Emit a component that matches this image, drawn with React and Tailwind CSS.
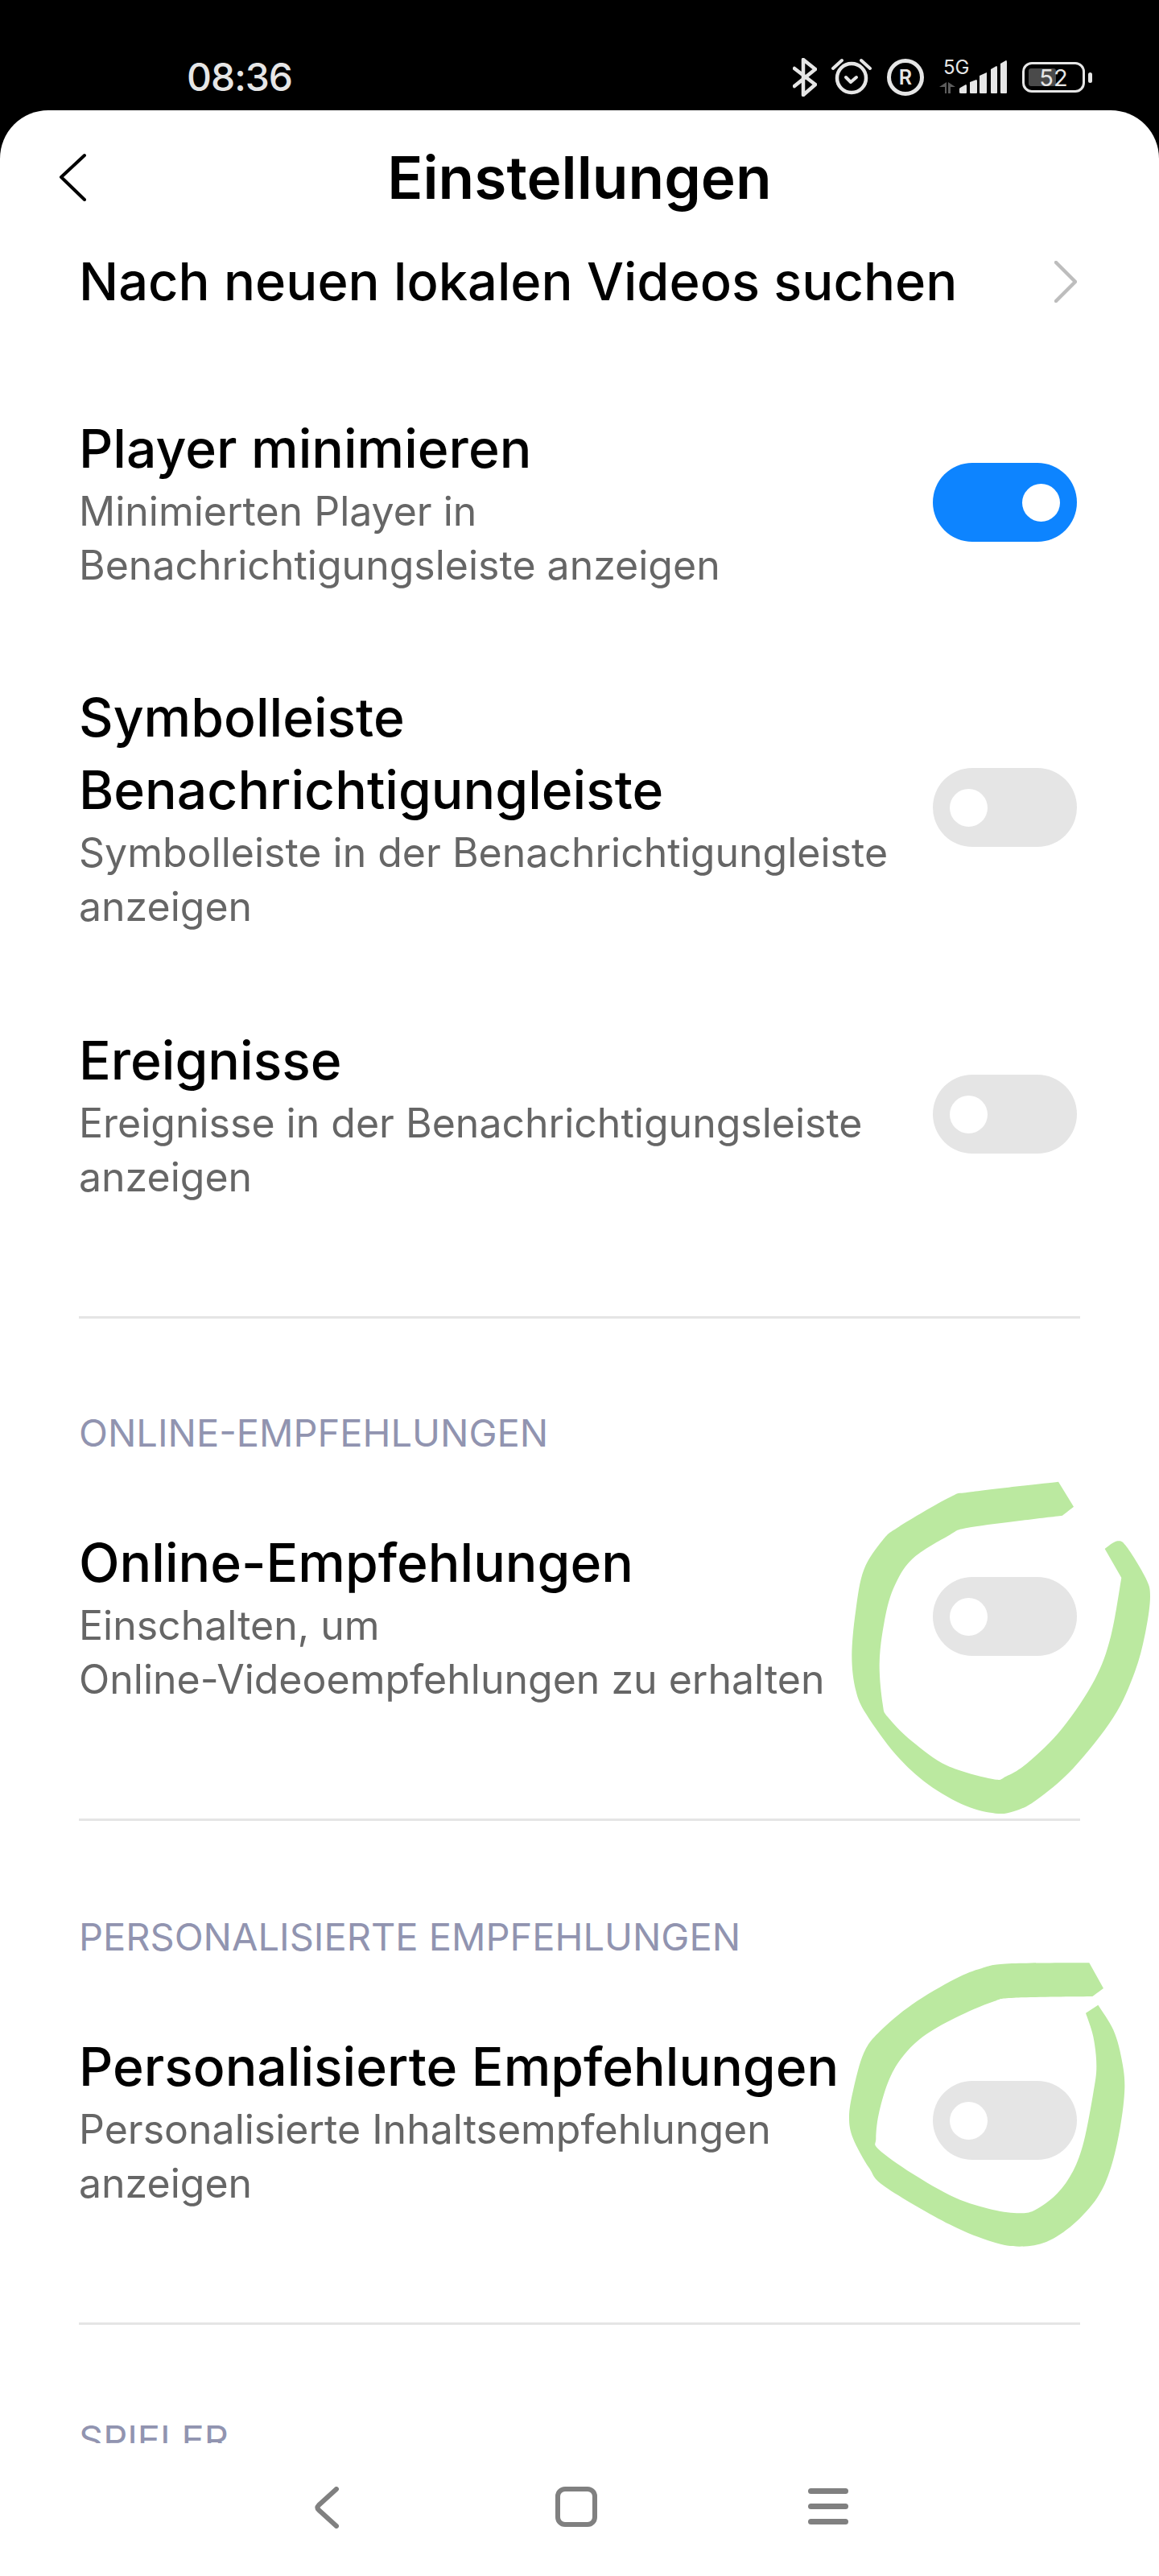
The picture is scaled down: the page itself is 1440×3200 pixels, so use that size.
const font = 'font-["Inter","Noto_Sans",sans-serif]'

const catmull = (pts) => {
  let d = ''
  for (let i = 0; i < pts.length - 1; i++) {
    const p0 = pts[i - 1] || pts[i]
    const p1 = pts[i]
    const p2 = pts[i + 1]
    const p3 = pts[i + 2] || p2
    const c1 = [p1[0] + (p2[0] - p0[0]) / 6, p1[1] + (p2[1] - p0[1]) / 6]
    const c2 = [p2[0] - (p3[0] - p1[0]) / 6, p2[1] - (p3[1] - p1[1]) / 6]
    d += `C${c1[0]} ${c1[1]} ${c2[0]} ${c2[1]} ${p2[0]} ${p2[1]}`
  }
  return d
}

const scribble = (runs) => {
  let d = `M${runs[0][0][0]} ${runs[0][0][1]}`
  runs.forEach((run, i) => {
    if (i > 0) d += `L${run[0][0]} ${run[0][1]}`
    d += catmull(run)
  })
  return d + 'Z'
}

const scribbleOne = scribble([
  [[960, 248], [780, 270], [600, 295], [540, 320], [400, 410], [330, 520], [295, 650], [278, 800], [290, 950], [310, 1000], [400, 1090], [530, 1180], [700, 1230], [750, 1220], [830, 1170], [960, 1040], [1080, 860], [1140, 700], [1180, 480]],
  [[1118, 372], [1165, 343], [1200, 365], [1270, 480], [1287, 550], [1270, 680], [1230, 830], [1150, 1000], [1000, 1190], [860, 1310], [780, 1350], [710, 1358], [600, 1330], [460, 1250], [340, 1140], [230, 990], [190, 900], [175, 770], [190, 600], [220, 450], [290, 340], [350, 290], [540, 180], [620, 160], [945, 122]],
  [[1002, 215], [960, 248]],
])

const scribbleTwo = scribble([
  [[1072, 240], [780, 245], [700, 260], [560, 320], [440, 390], [360, 470], [310, 560], [275, 680], [265, 770], [275, 810], [400, 900], [560, 990], [700, 1035], [800, 1048], [860, 1035], [940, 975], [1000, 890], [1040, 780], [1075, 600], [1087, 500], [1075, 390], [1047, 302]],
  [[1093, 272], [1150, 365], [1180, 470], [1192, 580], [1175, 730], [1140, 880], [1090, 990], [1000, 1090], [900, 1155], [800, 1172], [700, 1155], [540, 1090], [300, 950], [240, 880], [180, 770], [165, 690], [180, 590], [220, 450], [280, 370], [400, 270], [560, 175], [660, 135], [760, 118], [1060, 115]],
  [[1113, 210], [1072, 240]],
])

function Toggle({ on }) {
  return (
    <div className={`w-[179px] h-[98px] shrink-0 rounded-full flex items-center px-[21px] ${on ? 'bg-[#0d84ff] justify-end' : 'bg-[#e5e5e5] justify-start'}`}>
      <div className="w-[47px] h-[47px] rounded-full bg-white" />
    </div>
  )
}

function Row({ title, sub, on, className }) {
  return (
    <div className={`flex items-center justify-between pr-[102px] ${className}`}>
      <div className="w-[1040px]">
        <div className="text-[66px] leading-[90px] font-medium text-black">{title}</div>
        <div className="text-[50px] leading-[67px] text-[#666666]">{sub}</div>
      </div>
      <Toggle on={on} />
    </div>
  )
}

function StatusIcons() {
  return (
    <div className="ml-auto mr-[83px] flex items-center text-[#e6e6e6]">
      <svg width="30" height="48" viewBox="0 0 30 48" fill="none" stroke="currentColor" strokeWidth="4.5" strokeLinejoin="round" strokeLinecap="round">
        <path d="M2 13 28 33 13 46V2L28 14 2 35" />
      </svg>
      <svg className="ml-[18px]" width="50" height="48" viewBox="0 0 50 48" fill="none" stroke="currentColor" strokeLinecap="round" strokeLinejoin="round">
        <circle cx="25" cy="25" r="18" strokeWidth="4.5" />
        <path d="M18 24 24 30 31 24" strokeWidth="4" />
        <path d="M2 13 13 3M48 13 37 3" strokeWidth="4" />
      </svg>
      <div className="ml-[19px] w-[46px] h-[46px] rounded-full border-[5px] border-[#e6e6e6] flex items-center justify-center text-[25px] leading-none font-semibold">R</div>
      <div className="ml-[19px] relative w-[85px] h-[42px]">
        <span className="absolute left-[5px] -top-[3px] text-[24px] leading-[24px]">5G</span>
        <svg className="absolute left-0 top-0" width="85" height="42" viewBox="0 0 85 42" fill="currentColor">
          <path d="M0 33 9 27V41H7V33ZM11 27 20 33H14V41H11Z" opacity="0.4" />
          <path d="M26 34 33 30Q34 30 34 32V40Q34 41 33 41H27Q25 41 25 40V35Z" />
          <path d="M38 27 46 24Q47 24 47 26V40Q47 41 46 41H39Q38 41 38 40Z" />
          <path d="M50 19 59 15V40Q59 41 58 41H51Q50 41 50 40Z" />
          <path d="M64 11 71 7Q72 7 72 9V40Q72 41 71 41H65Q64 41 64 40Z" />
          <path d="M76 4 83 0Q84 0 84 2V40Q84 41 83 41H77Q76 41 76 40Z" />
        </svg>
      </div>
      <div className="ml-[18px] relative w-[78px] h-[38px] rounded-[12px] border-[3px] border-[#e6e6e6] px-[5px] py-[5px]">
        <div className="h-full w-[34px] rounded-[3px] bg-[#4a4a4a]" />
        <span className="absolute inset-0 flex items-center justify-center text-[29px] leading-none">52</span>
      </div>
      <div className="ml-[4px] w-[5px] h-[13px] rounded-full bg-[#e6e6e6]" />
    </div>
  )
}

export default function App() {
  return (
    <div className={`relative h-[3200px] w-[1440px] bg-black flex flex-col overflow-hidden ${font}`}>
      <div className="h-[137px] shrink-0 flex items-center pl-[232px] pt-[55px] text-[#e6e6e6]">
        <span className="text-[48px] font-medium leading-none tracking-[-1px]">08:36</span>
        <StatusIcons />
      </div>

      <div className="flex-1 min-h-0 bg-white rounded-t-[60px] flex flex-col">
        <div className="relative h-[120px] shrink-0 flex items-center justify-center">
          <svg className="absolute left-[72px] top-[53px]" width="36" height="60" viewBox="0 0 36 60" fill="none" stroke="#000" strokeWidth="4" strokeLinecap="round" strokeLinejoin="round">
            <path d="M33 3 4 30 33 58" />
          </svg>
          <span className="text-[73px] font-semibold leading-none text-black pt-[46px]">Einstellungen</span>
        </div>

        <div className="flex-1 min-h-0 overflow-hidden pl-[98px]">
          <div className="flex items-center justify-between pr-[102px] mt-[48px] h-[90px]">
            <span className="text-[65px] leading-[90px] font-medium text-black">Nach neuen lokalen Videos suchen</span>
            <svg width="28" height="52" viewBox="0 0 28 52" fill="none" stroke="#bdbdbd" strokeWidth="4.5" strokeLinecap="round" strokeLinejoin="round">
              <path d="M2 2 26 26 2 50" />
            </svg>
          </div>

          <Row className="mt-[117px]" title="Player minimieren" sub={<>Minimierten Player in<br />Benachrichtigungsleiste anzeigen</>} on />
          <Row className="mt-[110px]" title={<>Symbolleiste<br />Benachrichtigungleiste</>} sub={<>Symbolleiste in der Benachrichtigungleiste<br />anzeigen</>} />
          <Row className="mt-[112px]" title="Ereignisse" sub={<>Ereignisse in der Benachrichtigungsleiste<br />anzeigen</>} />

          <div className="mt-[139px] w-[1244px] h-[3px] bg-[#e5e5e5]" />
          <div className="mt-[112px] text-[47px] leading-[60px] text-[#9194b0]">ONLINE-EMPFEHLUNGEN</div>
          <Row className="mt-[86px]" title="Online-Empfehlungen" sub={<>Einschalten, um<br />Online-Videoempfehlungen zu erhalten</>} />
          <div className="mt-[139px] w-[1244px] h-[3px] bg-[#e5e5e5]" />
          <div className="mt-[114px] text-[47px] leading-[60px] text-[#9194b0]">PERSONALISIERTE EMPFEHLUNGEN</div>
          <Row className="mt-[86px]" title="Personalisierte Empfehlungen" sub={<>Personalisierte Inhaltsempfehlungen<br />anzeigen</>} />
          <div className="mt-[139px] w-[1244px] h-[3px] bg-[#e5e5e5]" />
          <div className="mt-[112px] text-[47px] leading-[60px] text-[#9194b0]">SPIELER</div>
        </div>

        <div className="h-[165px] shrink-0 flex items-start pt-[54px]">
          <svg className="ml-[388px]" width="34" height="52" viewBox="0 0 34 52" fill="none" stroke="#808080" strokeWidth="6" strokeLinecap="round" strokeLinejoin="round">
            <path d="M30 3 8 23Q5 26 8 29L30 49" />
          </svg>
          <div className="ml-[268px] w-[52px] h-[50px] rounded-[12px] border-[6px] border-[#808080]" />
          <div className="ml-[262px] w-[50px] flex flex-col gap-[12px] pt-[2px]">
            <div className="h-[7px] rounded-full bg-[#808080]" />
            <div className="h-[7px] rounded-full bg-[#808080]" />
            <div className="h-[7px] rounded-full bg-[#808080]" />
          </div>
        </div>
      </div>

      <svg className="absolute left-[1000px] top-[1800px]" width="440" height="480" viewBox="0 0 1320 1440" fill="#bbe9a0"><path d={scribbleOne} /></svg>
      <svg className="absolute left-[1000px] top-[2400px]" width="440" height="420" viewBox="0 0 1320 1260" fill="#bbe9a0"><path d={scribbleTwo} /></svg>
    </div>
  )
}
